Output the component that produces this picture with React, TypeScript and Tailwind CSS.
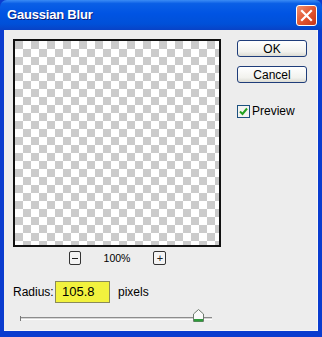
export default function App() {
  return (
    <div className="w-[322px] h-[337px] flex flex-col bg-[#0a3ccf] font-['Liberation_Sans',Arial,sans-serif] select-none overflow-hidden">
      {/* title bar */}
      <div className="h-[30px] flex items-center justify-between pl-[7px] pr-[5px] rounded-t-[7px] bg-[linear-gradient(#3b8cf5_0%,#0a5fe6_12%,#0054e3_45%,#0050d8_80%,#0842c6_100%)]">
        <span className="text-white text-[13px] font-bold tracking-[-0.2px] [text-shadow:1px_1px_0_#0a1f7a]">
          Gaussian Blur
        </span>
        <div className="w-[21px] h-[21px] rounded-[3px] border border-white bg-[linear-gradient(135deg,#f0906e,#e1532e_55%,#c7361a)] flex items-center justify-center">
          <svg width="13" height="13" viewBox="0 0 13 13">
            <path d="M2 2L11 11M11 2L2 11" stroke="white" strokeWidth="2.2" strokeLinecap="square" />
          </svg>
        </div>
      </div>

      {/* body */}
      <div className="flex-1 mx-[4px] mb-[6px] bg-[#ededed] border-r border-b border-[#f8f8f8] flex pt-[9px] pl-[9px]">
        {/* left column */}
        <div className="w-[208px] flex flex-col">
          <div className="w-[208px] h-[208px] border-2 border-[#111] bg-[conic-gradient(#fff_25%,#cbcbcb_0_50%,#fff_0_75%,#cbcbcb_0)] bg-[length:16px_16px]" />

          <div className="mt-[4px] h-[14px] flex items-center justify-center gap-[23px] pl-[1px]">
            <div className="w-[12px] h-[14px] rounded-[2px] border border-[#333] bg-[#f4f4f4] flex items-center justify-center">
              <div className="w-[6px] h-px bg-[#222]" />
            </div>
            <span className="text-[10.5px] text-black leading-none">100%</span>
            <div className="w-[13px] h-[14px] rounded-[2px] border border-[#333] bg-[#f4f4f4] flex items-center justify-center text-[11px] leading-none text-[#222]">
              +
            </div>
          </div>

          <div className="mt-[16px] h-[22px] flex items-center">
            <span className="text-[12px] text-black w-[42px]">Radius:</span>
            <div className="w-[55px] h-[22px] bg-[#f2f23e] border border-[#8a8a5a] flex items-center pl-[6px] text-[13px] text-black">
              105.8
            </div>
            <span className="ml-[8px] text-[12px] text-black">pixels</span>
          </div>

          <div className="mt-[9px] ml-[7px] w-[192px] h-[12px] relative flex items-center">
            <div className="w-full h-[3px] border-t border-[#8c8c8c] border-b border-b-white bg-[#d6d6d6]" />
            <div className="absolute left-0 top-[4px] w-px h-[5px] bg-[#777]" />
            <svg className="absolute left-[173px] -top-[3px]" width="11" height="13" viewBox="0 0 11 13">
              <path d="M0.5 12.5V5L5.5 0.5L10.5 5V12.5Z" fill="#fafafa" stroke="#6e7b6e" />
              <rect x="1" y="10" width="9" height="2.5" fill="#2e9a3a" />
            </svg>
          </div>
        </div>

        {/* right column */}
        <div className="ml-[16px] w-[70px] flex flex-col">
          <div className="mt-[1px] h-[17px] rounded-[3px] border border-[#1f3d7a] bg-[linear-gradient(#ffffff,#f2f2ee_70%,#dcdcd4)] flex items-center justify-center text-[12px] text-black">
            OK
          </div>
          <div className="mt-[9px] h-[17px] rounded-[3px] border border-[#1f3d7a] bg-[linear-gradient(#ffffff,#f2f2ee_70%,#dcdcd4)] flex items-center justify-center text-[12px] text-black">
            Cancel
          </div>
          <div className="mt-[19px] flex items-center">
            <div className="w-[13px] h-[13px] border border-[#1c5180] bg-[#f4f4f0] flex items-center justify-center">
              <svg width="9" height="9" viewBox="0 0 9 9">
                <path d="M1 4.5L3.5 7L8 1.5" fill="none" stroke="#21a121" strokeWidth="2" />
              </svg>
            </div>
            <span className="ml-[2px] text-[12px] text-black">Preview</span>
          </div>
        </div>
      </div>
    </div>
  );
}
